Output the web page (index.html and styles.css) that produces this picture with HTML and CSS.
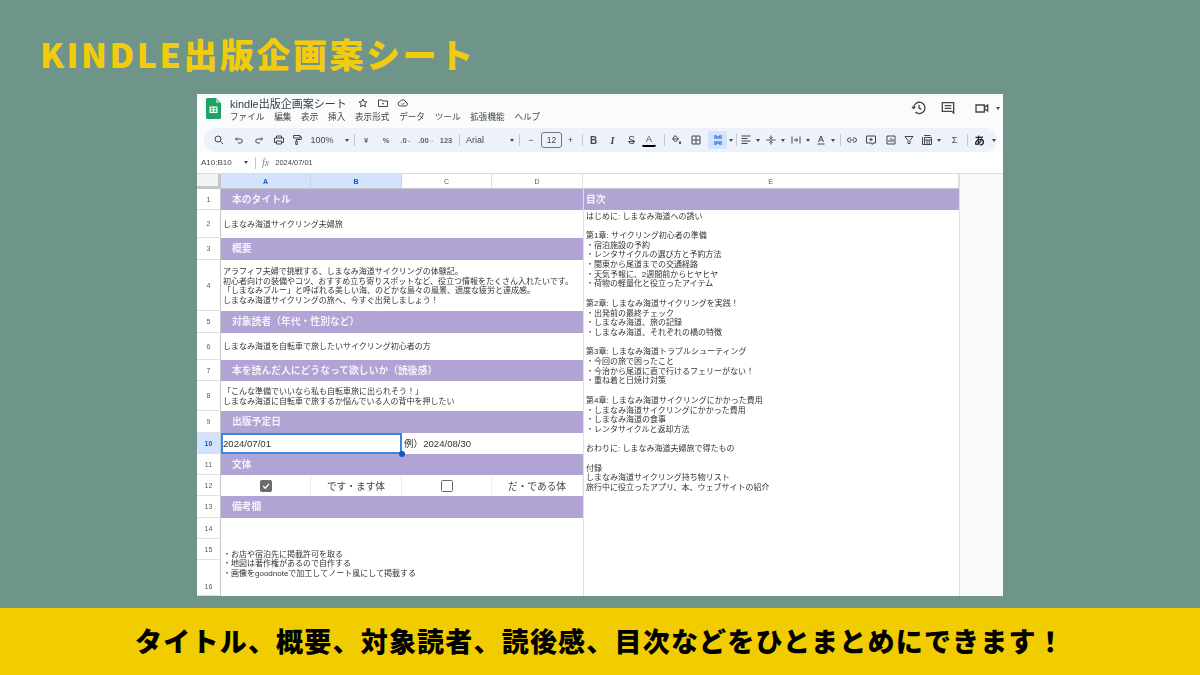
FILE: index.html
```html
<!DOCTYPE html>
<html lang="ja">

<head>
    <meta charset="UTF-8">
    <title>KINDLE出版企画案シート</title>
    <link rel="stylesheet" href="styles.css">
</head>

<body>
    <h1 class="page-title">KINDLE出版企画案シート</h1>

    <div class="stage">
        <div class="window">
            <!-- タイトルとメニュー -->
            <header class="top">
                <svg class="logo" viewBox="0 0 15 21">
                    <path d="M1.5 0H10l5 5v14.5a1.5 1.5 0 0 1-1.5 1.5h-12A1.5 1.5 0 0 1 0 19.500V1.500A1.500 1.500 0 0 1 1.500 0z" fill="#1ea362" />
                    <path d="M10 0l5 5h-5z" fill="#8ed1b1" />
                    <path d="M3.500 8.500h8v6.500h-8zM4.700 9.700v1.500h2.200V9.700zm3.400 0v1.500h2.200V9.700zM4.700 12.300v1.500h2.200v-1.500zm3.400 0v1.500h2.200v-1.500z" fill="#fff" fill-rule="evenodd" />
                </svg>
                <div class="doc">
                    <div class="doc-name">
                        <span class="doc-title">kindle出版企画案シート</span>
                        <svg class="ic" viewBox="0 0 24 24"><path d="M12 4l2.400 5.400 5.600.6-4.200 3.800 1.200 5.700-5-3-5 3 1.200-5.700L4 10l5.600-.6z" /></svg>
                        <svg class="ic" viewBox="0 0 24 24"><path d="M3 6h7l2 2h9v11H3zM10 13.500h4" /></svg>
                        <svg class="ic" viewBox="0 0 24 24"><path d="M7 18a4.500 4.500 0 0 1-.5-9 6 6 0 0 1 11.300 1.500A3.800 3.800 0 0 1 17.500 18zM9.500 13l2 2 3.500-3.500" /></svg>
                    </div>
                    <nav class="menu">
                        <a href="javascript:;">ファイル</a>
                        <a href="javascript:;">編集</a>
                        <a href="javascript:;">表示</a>
                        <a href="javascript:;">挿入</a>
                        <a href="javascript:;">表示形式</a>
                        <a href="javascript:;">データ</a>
                        <a href="javascript:;">ツール</a>
                        <a href="javascript:;">拡張機能</a>
                        <a href="javascript:;">ヘルプ</a>
                    </nav>
                </div>
                <div class="actions">
                    <svg class="ic-big" viewBox="0 0 24 24"><path d="M4 12a8.500 8.500 0 1 1 2.600 6M1.500 10l2.500 2.500L6.500 10M12 7.500V12l3.500 2" /></svg>
                    <svg class="ic-big" viewBox="0 0 24 24"><path d="M3.500 4h17v15.500l-3-2.500h-14zM7 8.500h10M7 12.500h10" /></svg>
                    <svg class="ic-big ic-video" viewBox="0 0 24 24"><path d="M3 7.500h12.500V18H3zM15.500 11l5-3.500v9l-5-3.500" /></svg>
                    <span class="caret"></span>
                </div>
            </header>

            <!-- ツールバー -->
            <div class="toolbar">
                <span class="tb w20"><svg class="ic" viewBox="0 0 24 24"><path d="M10 4a6 6 0 1 0 0 12 6 6 0 0 0 0-12zM14.500 14.500L20 20" /></svg></span>
                <span class="tb w20"><svg class="ic" viewBox="0 0 24 24"><path d="M8 7L5 10l3 3M5 10h9.500a4 4 0 0 1 0 8H10" /></svg></span>
                <span class="tb w20"><svg class="ic" viewBox="0 0 24 24"><path d="M16 7l3 3-3 3M19 10H9.500a4 4 0 0 0 0 8H14" /></svg></span>
                <span class="tb w19"><svg class="ic" viewBox="0 0 24 24"><path d="M7 8V4h10v4M7 17H3v-9h18v9h-4M7 14h10v6H7z" /></svg></span>
                <span class="tb w18"><svg class="ic" viewBox="0 0 24 24"><path d="M5 3h13v5H5zM18 5.500h2.500V11H11v3M9.500 14h3v7h-3z" /></svg></span>
                <span class="tb w37 tb-text">100%</span>
                <span class="caret"></span>
                <span class="sep"></span>
                <span class="tb w20 tb-small">¥</span>
                <span class="tb w20 tb-small">%</span>
                <span class="tb w20 tb-small">.0<sub>←</sub></span>
                <span class="tb w20 tb-small">.00<sub>→</sub></span>
                <span class="tb w20 tb-small">123</span>
                <span class="sep"></span>
                <span class="tb w47 tb-text">Arial</span>
                <span class="caret"></span>
                <span class="sep"></span>
                <span class="tb w20 tb-text">−</span>
                <span class="font-size">12</span>
                <span class="tb w17 tb-text">+</span>
                <span class="sep"></span>
                <span class="tb w19 tb-bold">B</span>
                <span class="tb w19 tb-italic">I</span>
                <span class="tb w19 tb-strike">S</span>
                <span class="tb w20 tb-color">A</span>
                <span class="sep"></span>
                <span class="tb w20"><svg class="ic" viewBox="0 0 24 24"><path d="M10 3l7 7-6 6-6-6zM6 10h11M20 15l1.500 3a1.500 1.500 0 0 1-3 0z" /></svg></span>
                <span class="tb w20"><svg class="ic" viewBox="0 0 24 24"><path d="M4 4h16v16H4zM12 4v16M4 12h16" /></svg></span>
                <span class="tb w19 tb-on"><svg class="ic ic-blue" viewBox="0 0 24 24"><path d="M4 4h6v6M20 4h-6v6M4 20h6v-6M20 20h-6v-6M4 8h4M16 8h4M4 16h4M16 16h4" /></svg></span>
                <span class="caret"></span>
                <span class="sep sep-tight"></span>
                <span class="tb w16"><svg class="ic" viewBox="0 0 24 24"><path d="M3 4h18M3 9h12M3 14h18M3 19h12" /></svg></span>
                <span class="caret"></span>
                <span class="tb w17"><svg class="ic" viewBox="0 0 24 24"><path d="M3 12h18M12 3v6M9 6.500L12 9.500l3-3M12 21v-6M9 17.500l3-3 3 3" /></svg></span>
                <span class="caret"></span>
                <span class="tb w17"><svg class="ic" viewBox="0 0 24 24"><path d="M4 5v14M20 5v14M8 12h7M12 8.500l3.500 3.500-3.500 3.500" /></svg></span>
                <span class="caret"></span>
                <span class="tb w17"><svg class="ic" viewBox="0 0 24 24"><path d="M5 20h14M7 16l5-12 5 12M9 12h6" /></svg></span>
                <span class="caret"></span>
                <span class="sep"></span>
                <span class="tb w19"><svg class="ic" viewBox="0 0 24 24"><path d="M10 8H7a4 4 0 0 0 0 8h3M14 8h3a4 4 0 0 1 0 8h-3M8 12h8" /></svg></span>
                <span class="tb w20"><svg class="ic" viewBox="0 0 24 24"><path d="M3 4h18v14h-5l-1.500 3-1.500-3H3zM12 7.500v7M8.500 11h7" /></svg></span>
                <span class="tb w19"><svg class="ic" viewBox="0 0 24 24"><path d="M4 4h16v16H4zM8 16v-4M12 16V8M16 16v-6" /></svg></span>
                <span class="tb w18"><svg class="ic" viewBox="0 0 24 24"><path d="M4 5h16l-6 8v6h-4v-6z" /></svg></span>
                <span class="tb w17"><svg class="ic" viewBox="0 0 24 24"><path d="M6 3h13M3 6v15h15M7 7h14v14H7zM7 12h14M12 12v9M16.500 12v9" /></svg></span>
                <span class="caret"></span>
                <span class="tb w23 tb-text">Σ</span>
                <span class="sep sep-tight"></span>
                <span class="tb w21 tb-kana">あ</span>
                <span class="caret"></span>
            </div>

            <!-- 数式バー -->
            <div class="formula">
                <span class="range">A10:B10</span>
                <span class="caret"></span>
                <span class="sep"></span>
                <i class="fx">fx</i>
                <span>2024/07/01</span>
            </div>

            <!-- シート本体 -->
            <div class="sheet">
                <div class="gutter"></div>
                <div class="toc">はじめに: しまなみ海道への誘い

第1章: サイクリング初心者の準備
・宿泊施設の予約
・レンタサイクルの選び方と予約方法
・関東から尾道までの交通経路
・天気予報に、2週間前からヒヤヒヤ
・荷物の軽量化と役立ったアイテム

第2章: しまなみ海道サイクリングを実践！
・出発前の最終チェック
・しまなみ海道、旅の記録
・しまなみ海道、それぞれの橋の特徴

第3章: しまなみ海道トラブルシューティング
・今回の旅で困ったこと
・今治から尾道に直で行けるフェリーがない！
・重ね着と日焼け対策

第4章: しまなみ海道サイクリングにかかった費用
・しまなみ海道サイクリングにかかった費用
・しまなみ海道の食事
・レンタサイクルと返却方法

おわりに: しまなみ海道夫婦旅で得たもの

付録
しまなみ海道サイクリング持ち物リスト
旅行中に役立ったアプリ、本、ウェブサイトの紹介</div>

                <div class="corner"></div>
                <div class="col col-on">A</div>
                <div class="col col-on">B</div>
                <div class="col">C</div>
                <div class="col">D</div>
                <div class="col">E</div>

                <div class="num">1</div>
                <div class="head span4">本のタイトル</div>
                <div class="head-toc">目次</div>

                <div class="num">2</div>
                <div class="cell span4">しまなみ海道サイクリング夫婦旅</div>

                <div class="num">3</div>
                <div class="head span4">概要</div>

                <div class="num">4</div>
                <div class="cell span4">アラフィフ夫婦で挑戦する、しまなみ海道サイクリングの体験記。<br>初心者向けの装備やコツ、おすすめ立ち寄りスポットなど、役立つ情報をたくさん入れたいです。<br>「しまなみブルー」と呼ばれる美しい海、のどかな島々の風景、適度な疲労と達成感。<br>しまなみ海道サイクリングの旅へ、今すぐ出発しましょう！</div>

                <div class="num">5</div>
                <div class="head span4">対象読者（年代・性別など）</div>

                <div class="num">6</div>
                <div class="cell span4">しまなみ海道を自転車で旅したいサイクリング初心者の方</div>

                <div class="num">7</div>
                <div class="head span4">本を読んだ人にどうなって欲しいか（読後感）</div>

                <div class="num">8</div>
                <div class="cell span4">「こんな準備でいいなら私も自転車旅に出られそう！」<br>しまなみ海道に自転車で旅するか悩んでいる人の背中を押したい</div>

                <div class="num">9</div>
                <div class="head span4">出版予定日</div>

                <div class="num num-on">10</div>
                <div class="cell-date selected">2024/07/01</div>
                <div class="cell-date span2">例）2024/08/30</div>

                <div class="num">11</div>
                <div class="head span4">文体</div>

                <div class="num">12</div>
                <div class="cell-mid"><span class="check check-on">
                    <svg viewBox="0 0 14 14"><path d="M3 7l3 3 5-6" /></svg>
                </span></div>
                <div class="cell-mid">です・ます体</div>
                <div class="cell-mid"><span class="check"></span></div>
                <div class="cell-mid">だ・である体</div>

                <div class="num">13</div>
                <div class="head span4">備考欄</div>

                <div class="num">14</div>
                <div class="note span4">・お店や宿泊先に掲載許可を取る<br>・地図は著作権があるので自作する<br>・画像をgoodnoteで加工してノート風にして掲載する</div>
                <div class="num">15</div>
                <div class="num num-low">16</div>
            </div>
        </div>
    </div>

    <footer class="band">タイトル、概要、対象読者、読後感、目次などをひとまとめにできます！</footer>
</body>

</html>
```

FILE: styles.css
```css
body {
    margin: 0;
    width: 1200px;
    height: 675px;
    overflow: hidden;
    background: #6f958b;
    display: flex;
    flex-direction: column;
    font-family: "Liberation Sans", "Noto Sans CJK JP", sans-serif;
}

a {
    text-decoration: none;
    color: inherit;
}

.page-title {
    margin: 0;
    height: 81px;
    padding: 13px 0 0 40px;
    display: flex;
    align-items: center;
    font-family: "Noto Sans CJK JP", sans-serif;
    font-size: 34px;
    font-weight: 900;
    letter-spacing: 2.500px;
    color: #f2cc0c;
}

.stage {
    height: 502px;
    padding-left: 197px;
}

.window {
    width: 806px;
    height: 502px;
    background: #f9fbfd;
    display: flex;
    flex-direction: column;
    overflow: hidden;
    filter: blur(0.3px);
}

/* top */
.top {
    height: 34px;
    flex: none;
    display: flex;
    padding: 4px 3.500px 0 9px;
    box-sizing: border-box;
}

.logo {
    width: 15px;
    height: 21px;
}

.doc {
    margin: -3px 0 0 9px;
    flex: 1;
}

.doc-name {
    display: flex;
    align-items: center;
    height: 15px;
    gap: 8px;
}

.doc-title {
    font-size: 11px;
    color: #3c4043;
    margin-right: 2px;
}

.menu {
    display: flex;
    gap: 9.750px;
    margin-top: 1px;
    font-size: 8.600px;
    line-height: 13px;
    color: #444746;
}

.ic {
    width: 12px;
    height: 12px;
    fill: none;
    stroke: #444746;
    stroke-width: 2;
}

.ic-blue {
    stroke: #0b57d0;
}

.ic-big {
    width: 16px;
    height: 16px;
    fill: none;
    stroke: #444746;
    stroke-width: 2;
}

.ic-video {
    margin-left: 5px;
}

.actions {
    display: flex;
    align-items: center;
    gap: 13px;
    height: 18px;
    margin-top: 1px;
}

.actions .caret {
    margin-left: -7px;
}

.caret {
    display: inline-block;
    flex: none;
    width: 0;
    height: 0;
    border-left: 2.500px solid transparent;
    border-right: 2.500px solid transparent;
    border-top: 3px solid #444746;
}

/* toolbar */
.toolbar {
    margin: 0 6px 0 7px;
    height: 24px;
    background: #edf2fa;
    border-radius: 12px;
    display: flex;
    align-items: center;
    padding-left: 5px;
    flex: none;
}

.tb {
    flex: none;
    height: 18px;
    box-sizing: border-box;
    display: flex;
    align-items: center;
    justify-content: center;
    color: #444746;
    border-radius: 2px;
}

.w16 { width: 16px; }
.w17 { width: 17px; }
.w18 { width: 18px; }
.w19 { width: 19px; }
.w20 { width: 20px; }
.w21 { width: 21px; }
.w23 { width: 23px; }
.w37 { width: 37px; padding-right: 5px; }
.w47 { width: 47px; justify-content: flex-start; padding-left: 5px; }

.tb-text {
    font-size: 9px;
}

.tb-small {
    font-size: 7.500px;
    font-weight: 700;
    color: #5f6368;
}

.tb-small sub {
    font-size: 5px;
    line-height: 0;
}

.tb-bold {
    font-size: 10px;
    font-weight: 700;
}

.tb-italic {
    font-size: 10px;
    font-style: italic;
    font-family: "Liberation Serif", serif;
    font-weight: 700;
}

.tb-strike {
    font-size: 10px;
    text-decoration: line-through;
}

.tb-color {
    font-size: 9px;
    border-bottom: 2px solid #000;
    height: 13px;
    width: 14px;
    margin: 0 5px 0 1px;
}

.tb-kana {
    font-size: 11px;
    font-weight: 700;
    color: #222;
}

.tb-on {
    background: #d3e3fd;
    margin-left: 2px;
}

.toolbar > .caret {
    margin: 0 2px;
}

.sep {
    flex: none;
    width: 1px;
    height: 12px;
    background: #c7c7c7;
    margin: 0 1px 0 3px;
}

.sep-tight {
    margin-left: 1px;
}

.font-size {
    flex: none;
    width: 19px;
    height: 14px;
    border: 1px solid #747775;
    border-radius: 3px;
    text-align: center;
    font-size: 8.500px;
    line-height: 14px;
    color: #444746;
}

/* formula bar */
.formula {
    height: 22px;
    flex: none;
    display: flex;
    align-items: center;
    padding-left: 4px;
    font-size: 7.500px;
    color: #444746;
    border-bottom: 1px solid #dadce0;
    box-sizing: border-box;
    background: #fff;
}

.formula .sep {
    margin: 0 5px 0 7px;
}

.range {
    width: 43px;
    font-size: 8px;
}

.fx {
    font-family: "Liberation Serif", serif;
    font-size: 10px;
    color: #80868b;
    margin: 0 6px 0 1px;
}

/* sheet */
.sheet {
    display: grid;
    grid-template-columns: 24px 90px 91px 90px 91px 376px 44px;
    grid-template-rows: 15px 21px 28px 22px 51px 22px 27px 21px 30px 22px 21px 21px 21px 22px 21px 21px 36px;
    background: #fff;
    font-size: 8px;
    color: #333;
}

.sheet > div {
    box-sizing: border-box;
    min-width: 0;
}

.gutter {
    grid-column: 7;
    grid-row: 1 / span 17;
    background: #f8f9fa;
    border-left: 1px solid #e0e0e0;
}

.toc {
    grid-column: 6;
    grid-row: 3 / span 15;
    padding: 1.500px 0 0 2px;
    white-space: pre-line;
    line-height: 9.700px;
    border-left: 1px solid #e0e0e0;
}

.corner {
    background: #f1f3f4;
    border-right: 3px solid #c4c7c5;
    border-bottom: 3px solid #c4c7c5;
}

.col {
    display: flex;
    align-items: center;
    justify-content: center;
    font-size: 7px;
    color: #575a5c;
    border-right: 1px solid #e0e0e0;
    border-bottom: 1px solid #c4c7c5;
}

.col-on {
    background: #d3e3fd;
    color: #0b57d0;
    font-weight: 700;
    border-right-color: #c2d4f0;
}

.num {
    grid-column: 1;
    display: flex;
    align-items: center;
    justify-content: center;
    font-size: 7px;
    color: #575a5c;
    border-right: 1px solid #c4c7c5;
    border-bottom: 1px solid #e0e0e0;
}

.num-on {
    background: #d3e3fd;
    color: #0b57d0;
    font-weight: 700;
}

.num-low {
    align-items: flex-end;
    padding-bottom: 5px;
}

.span4 {
    grid-column: span 4;
}

.span2 {
    grid-column: span 2;
}

.head {
    background: #b1a3d3;
    color: #f4f1fa;
    font-size: 9.800px;
    font-weight: 700;
    display: flex;
    align-items: center;
    padding: 0 0 2px 11px;
}

.head-toc {
    background: #b1a3d3;
    color: #f4f1fa;
    font-size: 9.800px;
    font-weight: 700;
    display: flex;
    align-items: center;
    padding: 0 0 2px 2px;
    border-left: 1px solid #e0e0e0;
}

.cell {
    align-self: center;
    padding: 1px 0 0 2px;
    line-height: 9.500px;
}

.note {
    grid-row: span 3;
    align-self: end;
    padding: 0 0 17px 2px;
    line-height: 9.800px;
}

.cell-date {
    display: flex;
    align-items: center;
    padding: 0 0 1px 2px;
    font-size: 9.600px;
}

.selected {
    grid-column: span 2;
    position: relative;
    border: 2px solid #3a86e8;
    padding-left: 0;
}

/* fill handle */
.selected:after {
    content: "";
    position: absolute;
    right: -5px;
    bottom: -5px;
    width: 6px;
    height: 6px;
    border-radius: 50%;
    background: #0b57d0;
}

.cell-mid {
    display: flex;
    align-items: center;
    justify-content: center;
    font-size: 9.700px;
    color: #444;
    border-right: 1px solid #eee;
}

.check {
    width: 12px;
    height: 12px;
    border: 1px solid #6b6b6b;
    border-radius: 1.500px;
    box-sizing: border-box;
}

.check-on {
    background: #6b6b6b;
    display: flex;
}

.check svg {
    fill: none;
    stroke: #fff;
    stroke-width: 2;
}

/* bottom band */
.band {
    margin-top: 12px;
    height: 67px;
    box-sizing: border-box;
    padding-bottom: 2px;
    background: #f0cc00;
    display: flex;
    align-items: center;
    justify-content: center;
    font-family: "Noto Sans CJK JP", sans-serif;
    font-size: 27px;
    font-weight: 900;
    letter-spacing: 1.200px;
    color: #000;
}
```
